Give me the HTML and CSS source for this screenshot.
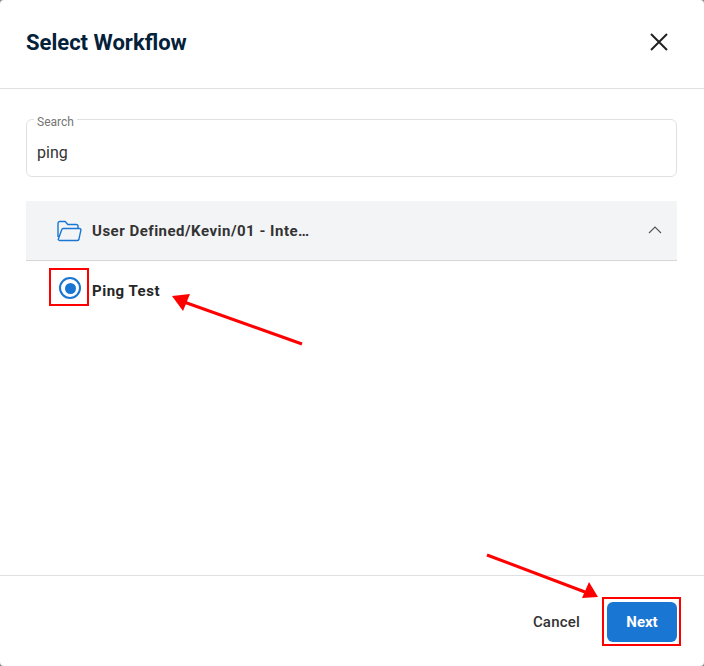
FILE: index.html
```html
<!DOCTYPE html>
<html lang="en">
<head>
<meta charset="utf-8">
<title>Select Workflow</title>
<link rel="stylesheet" href="styles.css">
</head>
<body>
<div class="dialog">
  <header class="head">
    <h1 class="title">Select Workflow</h1>
    <svg class="close" width="24" height="24" viewBox="0 0 24 24"><path d="M4 4l16 16M20 4L4 20" fill="none" stroke="#212121" stroke-width="2"/></svg>
  </header>
  <main class="body">
    <div class="search">
      <span class="search-label">Search</span>
      <span class="search-value">ping</span>
    </div>
    <div class="group">
      <svg class="folder" width="26" height="22" viewBox="0 0 26 22"><path d="M2 17V3.500C2 2.400 2.600 1.500 3.800 1.500h5.400l2.600 3h8.400c1.100 0 1.800.8 1.800 1.800V8M2.200 19.500c.3.6.8 1 1.500 1h17.600c.8 0 1.300-.4 1.600-1.100l2-9.200c.2-1-.5-1.700-1.400-1.700H7.300c-.8 0-1.400.4-1.600 1.200L2.200 19.500z" fill="none" stroke="#1976d2" stroke-width="1.400" stroke-linejoin="round"/></svg>
      <span class="group-name">User Defined/Kevin/01 - Inte…</span>
      <svg class="chevron" width="16" height="10" viewBox="0 0 16 10"><path d="M2 8l6-6 6 6" fill="none" stroke="#555" stroke-width="1.100"/></svg>
    </div>
    <div class="row">
      <span class="radio"><span class="radio-dot"></span></span>
      <span class="row-name">Ping Test</span>
    </div>
  </main>
  <footer class="foot">
    <span class="cancel">Cancel</span>
    <span class="next">Next</span>
  </footer>
  <span class="mark mark-radio"></span>
  <span class="mark mark-next"></span>
  <svg class="arrows" width="704" height="666" viewBox="0 0 704 666">
    <path d="M302 344L184 302" stroke="#f00" stroke-width="3" fill="none"/>
    <path d="M172 296L190 294L183 311Z" fill="#f00"/>
    <path d="M487 555L585 592" stroke="#f00" stroke-width="3" fill="none"/>
    <path d="M598 597L582 598L589 582Z" fill="#f00"/>
  </svg>
</div>
</body>
</html>
```
FILE: styles.css
```css
* { box-sizing: border-box; }
html, body { margin: 0; padding: 0; height: 100%; background: #8a8a8a; }
body { font-family: Roboto, "Liberation Sans", sans-serif; color: #212121; }
.dialog {
  position: relative;
  width: 704px;
  height: 666px;
  background: #fff;
  border-radius: 4px;
  display: flex;
  flex-direction: column;
  overflow: hidden;
}
.head {
  height: 89px;
  flex: none;
  border-bottom: 1px solid #e0e0e0;
  display: flex;
  align-items: center;
  justify-content: space-between;
  padding: 0 33px 2px 26px;
}
.title { margin: 0; font-size: 22px; font-weight: 700; line-height: 26px; color: #04213a; }
.close { display: block; margin-bottom: 2px; }
.body { flex: 1; padding: 30px 27px 0 26px; display: flex; flex-direction: column; }
.search {
  position: relative;
  height: 58px;
  flex: none;
  border: 1px solid #e0e0e0;
  border-radius: 6px;
  padding: 23px 10px 0;
}
.search-label {
  position: absolute;
  left: 7px;
  top: -6px;
  padding: 0 3px;
  background: #fff;
  font-size: 12px;
  line-height: 16px;
  color: #757575;
}
.search-value { display: block; font-size: 16px; line-height: 20px; color: #333; }
.group {
  margin-top: 24px;
  height: 60px;
  flex: none;
  background: #f3f4f6;
  border-bottom: 1px solid #d6d6d6;
  display: flex;
  align-items: center;
  padding: 0 14px 0 30px;
}
.folder { display: block; flex: none; }
.group-name { margin-left: 10px; font-size: 15px; font-weight: 700; letter-spacing: .5px; color: #333; }
.chevron { margin-left: auto; display: block; position: relative; top: -1px; }
.row { display: flex; align-items: center; height: 60px; padding: 0 0 0 33px; }
.radio {
  width: 22px;
  height: 22px;
  flex: none;
  border: 2px solid #1976d2;
  border-radius: 50%;
  display: flex;
  align-items: center;
  justify-content: center;
  position: relative;
  top: -3px;
}
.radio-dot { width: 11px; height: 11px; border-radius: 50%; background: #1976d2; }
.row-name { margin-left: 11px; font-size: 15px; font-weight: 700; letter-spacing: .5px; color: #262626; }
.foot {
  height: 91px;
  flex: none;
  border-top: 1px solid #e0e0e0;
  display: flex;
  align-items: center;
  justify-content: flex-end;
  padding: 2px 27px 0 0;
}
.cancel { font-size: 15px; font-weight: 500; letter-spacing: .2px; color: #333; margin-right: 27px; }
.next {
  width: 70px;
  height: 40px;
  border-radius: 6px;
  background: #1976d2;
  color: #fff;
  font-size: 15px;
  font-weight: 700;
  display: flex;
  align-items: center;
  justify-content: center;
}
.mark { position: absolute; border: 2px solid #f00; }
.mark-radio { left: 49px; top: 268px; width: 40px; height: 38px; }
.mark-next { left: 602px; top: 597px; width: 79px; height: 49px; }
.arrows { position: absolute; left: 0; top: 0; pointer-events: none; }
```
